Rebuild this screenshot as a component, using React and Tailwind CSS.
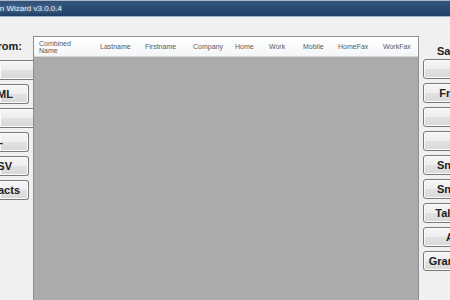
import React from "react";

const leftButtons = [
  { label: "Outlook", pr: "pr-[40px]" },
  { label: "HTML", pr: "pr-[15px]" },
  { label: "vCard", pr: "pr-[40px]" },
  { label: "-", pr: "pr-[25px]" },
  { label: "CSV", pr: "pr-[16px]" },
  { label: "Contacts", pr: "pr-[8px]" },
];

const rightButtons = ["", "Fritz!Box", "", "", "Snom 300", "Snom 370", "Talkswitch", "Aastra", "Grandstream"];

const columns = [
  { title: "Combined Name", w: "w-[61px]" },
  { title: "Lastname", w: "w-[45px]" },
  { title: "Firstname", w: "w-[48px]" },
  { title: "Company", w: "w-[42px]" },
  { title: "Home", w: "w-[34px]" },
  { title: "Work", w: "w-[34px]" },
  { title: "Mobile", w: "w-[35px]" },
  { title: "HomeFax", w: "w-[45px]" },
  { title: "WorkFax", w: "w-[40px]" },
];

const btn =
  "h-[20px] border border-[#7a7a7a] rounded-[3px] bg-[linear-gradient(to_bottom,#f6f6f6_0%,#eeeeee_50%,#e2e2e2_50%,#d8d8d8_100%)] shadow-[inset_0_0_0_1px_#fbfbfb] text-[11px] font-bold text-[#222] flex items-center whitespace-nowrap overflow-hidden";

export default function App() {
  return (
    <div className="w-[450px] h-[300px] overflow-hidden bg-[#f0f0f0] flex flex-col font-['Liberation_Sans',Arial,sans-serif]">
      {/* title bar */}
      <div className="h-[17px] shrink-0 border-t border-[#a9b7c8] border-b border-b-[#9fb2c8] bg-[linear-gradient(to_bottom,#33557d,#1f3f66)] flex items-center">
        <div className="w-[62px] flex justify-end overflow-hidden">
          <span className="text-[8px] text-[#e4ebf3] whitespace-nowrap [text-shadow:0_0_4px_#c9d6e6]">
            Address Conversion Wizard v3.0.0.4
          </span>
        </div>
      </div>

      <div className="flex-1 flex pt-[19px] min-h-0">
        {/* left column */}
        <div className="w-[29px] shrink-0 flex flex-col">
          <div className="h-[24px] flex justify-end items-start pt-[2px] overflow-hidden pr-[7px]">
            <span className="text-[11px] font-bold text-[#222] whitespace-nowrap">Import from:</span>
          </div>
          <div className="flex flex-col gap-[4px]">
            {leftButtons.map((b, i) => (
              <div key={i} className={`${btn} justify-end border-l-0 rounded-l-none ${b.pr}`}>
                <span>{b.label}</span>
              </div>
            ))}
          </div>
        </div>

        {/* grid */}
        <div className="ml-[4px] w-[386px] shrink-0 flex flex-col border border-[#8a8f96] border-b-0">
          <div className="h-[20px] shrink-0 bg-[linear-gradient(to_bottom,#ffffff,#f4f5f7)] border-b border-[#d5d5d5] flex items-center pl-[5px] text-[7px] leading-[7px] text-[#5a5a5a]">
            {columns.map((c) => (
              <div key={c.title} className={`${c.w} shrink-0 whitespace-normal`}>
                {c.title === "Combined Name" ? (
                  <span>
                    Combined
                    <br />
                    Name
                  </span>
                ) : (
                  c.title
                )}
              </div>
            ))}
          </div>
          <div className="flex-1 bg-[#ababab]" />
        </div>

        {/* right column */}
        <div className="ml-[4px] w-[80px] shrink-0 flex flex-col">
          <div className="h-[23px] pt-[2px] pl-[14px]">
            <span className="text-[11px] font-bold text-[#222] whitespace-nowrap">Save to:</span>
          </div>
          <div className="flex flex-col gap-[4px]">
            {rightButtons.map((l, i) => (
              <div key={i} className={`${btn} justify-center`}>
                {l}
              </div>
            ))}
          </div>
        </div>
      </div>
    </div>
  );
}
